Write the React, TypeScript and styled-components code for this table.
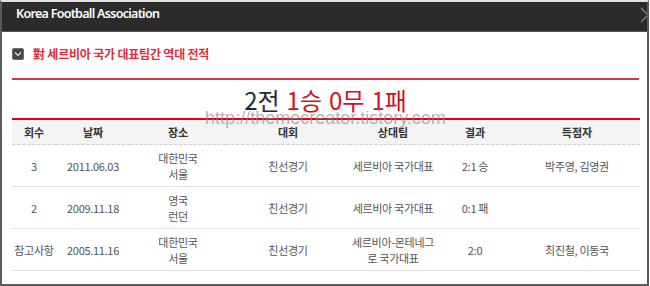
import styled, { createGlobalStyle } from "styled-components";

const GlobalStyle = createGlobalStyle`
  html, body {
    margin: 0;
    padding: 0;
    background: #ffffff;
  }
  body {
    font-family: "Noto Sans CJK KR", "Noto Sans", sans-serif;
  }
`;

const Frame = styled.div`
  width: 649px;
  height: 286px;
  box-sizing: border-box;
  border: 2px solid #5b5b5b;
  border-top: 2px solid #e2e2e2;
  background: #ffffff;
  overflow: hidden;
`;

const Header = styled.div`
  height: 30px;
  box-sizing: border-box;
  background: #2b2b2b;
  border-bottom: 1px solid #555555;
  display: flex;
  justify-content: space-between;
  align-items: flex-start;
  padding: 3px 0 0 14px;
  overflow: hidden;
`;

const HeaderTitle = styled.span`
  color: #ffffff;
  font-family: "Noto Sans", sans-serif;
  font-weight: 600;
  font-size: 12.5px;
  line-height: 18px;
  letter-spacing: -0.7px;
`;

const CloseButton = styled.span`
  display: flex;
  margin-right: -9px;
  margin-top: 2px;
`;

const Body = styled.div`
  padding: 14px 8px 0 10px;
`;

const SectionTitle = styled.div`
  display: flex;
  align-items: center;
  gap: 9px;
  height: 16px;
  padding-bottom: 16px;
  border-bottom: 2px solid #d33a45;
`;

const CheckIcon = styled.span`
  width: 12px;
  height: 12px;
  box-sizing: border-box;
  border-radius: 2px;
  background: #464646;
  border: 1px solid #6a6a6a;
  display: flex;
  align-items: center;
  justify-content: center;
`;

const TitleText = styled.h3`
  margin: 0;
  color: #d8303f;
  font-size: 12px;
  font-weight: 700;
  line-height: 16px;
  letter-spacing: -0.2px;
`;

const Summary = styled.div`
  position: relative;
  height: 38px;
  display: flex;
  align-items: center;
  justify-content: center;
  gap: 7px;
  font-size: 24px;
  line-height: 30px;
  padding-top: 2px;
  box-sizing: border-box;
`;

const Count = styled.span<{ $red?: boolean }>`
  color: ${({ $red }) => ($red ? "#d3101c" : "#1f2a3a")};
`;

const Watermark = styled.span`
  position: absolute;
  left: 0;
  right: 0;
  top: 29px;
  text-align: center;
  font-family: "Liberation Sans", Arial, sans-serif;
  font-size: 18px;
  line-height: 18px;
  color: rgba(130, 130, 130, 0.6);
  pointer-events: none;
  z-index: 2;
`;

const Table = styled.table`
  width: 100%;
  border-collapse: collapse;
  table-layout: fixed;
  border-top: 2px solid #e3000f;
`;

const Th = styled.th`
  height: 24px;
  padding: 0;
  background: #f4f4f4;
  border-bottom: 1px dashed #cfcfcf;
  color: #333333;
  font-size: 11px;
  font-weight: 700;
  text-align: center;
`;

const Td = styled.td`
  height: 41px;
  padding: 0;
  border-bottom: 1px solid #e2e2e2;
  color: #555555;
  font-size: 11px;
  line-height: 16px;
  text-align: center;
  letter-spacing: -0.3px;
`;

const columns = [
  { label: "회수", width: 44 },
  { label: "날짜", width: 74 },
  { label: "장소", width: 96 },
  { label: "대회", width: 124 },
  { label: "상대팀", width: 86 },
  { label: "결과", width: 78 },
  { label: "득점자", width: 126 },
];

const rows = [
  ["3", "2011.06.03", ["대한민국", "서울"], "친선경기", ["세르비아 국가대표"], "2:1 승", "박주영, 김영권"],
  ["2", "2009.11.18", ["영국", "런던"], "친선경기", ["세르비아 국가대표"], "0:1 패", ""],
  ["참고사항", "2005.11.16", ["대한민국", "서울"], "친선경기", ["세르비아-몬테네그", "로 국가대표"], "2:0", "최진철, 이동국"],
] as const;

const Lines = ({ value }: { value: string | readonly string[] }) =>
  typeof value === "string" ? (
    <>{value}</>
  ) : (
    <>
      {value.map((line, i) => (
        <div key={i}>{line}</div>
      ))}
    </>
  );

const App = () => {
  return (
    <>
      <GlobalStyle />
      <Frame>
        <Header>
          <HeaderTitle>Korea Football Association</HeaderTitle>
          <CloseButton>
            <svg width="16" height="16" viewBox="0 0 16 16">
              <path d="M1 1 L15 15 M15 1 L1 15" stroke="#7a7a7a" strokeWidth="1.4" fill="none" />
            </svg>
          </CloseButton>
        </Header>
        <Body>
          <SectionTitle>
            <CheckIcon>
              <svg width="8" height="6" viewBox="0 0 8 6">
                <path d="M1 1.5 L4 4.5 L7 1.5" stroke="#e8e8e8" strokeWidth="1.2" fill="none" />
              </svg>
            </CheckIcon>
            <TitleText>對 세르비아 국가 대표팀간 역대 전적</TitleText>
          </SectionTitle>
          <Summary>
            <Count>2전</Count>
            <Count $red>1승</Count>
            <Count $red>0무</Count>
            <Count $red>1패</Count>
            <Watermark>http://themecreator.tistory.com</Watermark>
          </Summary>
          <Table>
            <colgroup>
              {columns.map((c) => (
                <col key={c.label} style={{ width: c.width }} />
              ))}
            </colgroup>
            <thead>
              <tr>
                {columns.map((c) => (
                  <Th key={c.label}>{c.label}</Th>
                ))}
              </tr>
            </thead>
            <tbody>
              {rows.map((row, r) => (
                <tr key={r}>
                  {row.map((cell, i) => (
                    <Td key={i}>
                      <Lines value={cell} />
                    </Td>
                  ))}
                </tr>
              ))}
            </tbody>
          </Table>
        </Body>
      </Frame>
    </>
  );
};

export default App;
